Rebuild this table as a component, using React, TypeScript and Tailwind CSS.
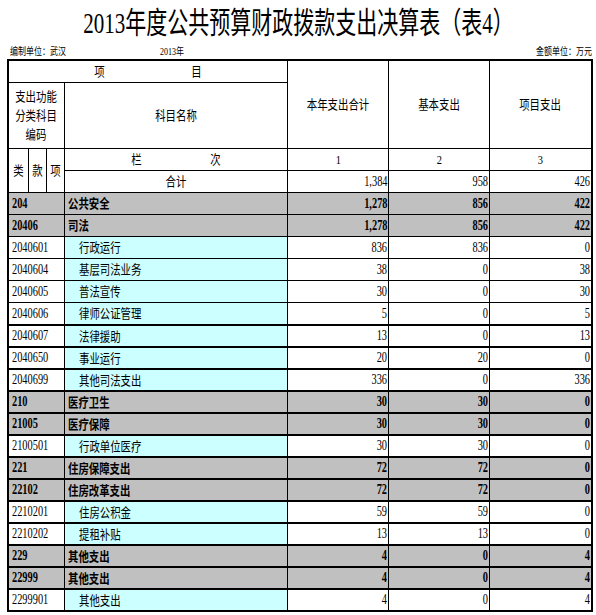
import React from "react";

type Row = {
  code: string;
  name: string;
  a: string;
  b: string;
  c: string;
  bold?: boolean;
};

const rows: Row[] = [
  { code: "204", name: "公共安全", a: "1,278", b: "856", c: "422", bold: true },
  { code: "20406", name: "司法", a: "1,278", b: "856", c: "422", bold: true },
  { code: "2040601", name: "行政运行", a: "836", b: "836", c: "0" },
  { code: "2040604", name: "基层司法业务", a: "38", b: "0", c: "38" },
  { code: "2040605", name: "普法宣传", a: "30", b: "0", c: "30" },
  { code: "2040606", name: "律师公证管理", a: "5", b: "0", c: "5" },
  { code: "2040607", name: "法律援助", a: "13", b: "0", c: "13" },
  { code: "2040650", name: "事业运行", a: "20", b: "20", c: "0" },
  { code: "2040699", name: "其他司法支出", a: "336", b: "0", c: "336" },
  { code: "210", name: "医疗卫生", a: "30", b: "30", c: "0", bold: true },
  { code: "21005", name: "医疗保障", a: "30", b: "30", c: "0", bold: true },
  { code: "2100501", name: "行政单位医疗", a: "30", b: "30", c: "0" },
  { code: "221", name: "住房保障支出", a: "72", b: "72", c: "0", bold: true },
  { code: "22102", name: "住房改革支出", a: "72", b: "72", c: "0", bold: true },
  { code: "2210201", name: "住房公积金", a: "59", b: "59", c: "0" },
  { code: "2210202", name: "提租补贴", a: "13", b: "13", c: "0" },
  { code: "229", name: "其他支出", a: "4", b: "0", c: "4", bold: true },
  { code: "22999", name: "其他支出", a: "4", b: "0", c: "4", bold: true },
  { code: "2299901", name: "其他支出", a: "4", b: "0", c: "4" },
];

// narrow text, the sheet's glyphs are squeezed sideways
const S = ({ children, o = "c" }: { children: React.ReactNode; o?: "l" | "r" | "c" }) => (
  <span
    className={
      "inline-block whitespace-nowrap scale-x-[0.8] " +
      (o === "l" ? "origin-left" : o === "r" ? "origin-right" : "origin-center")
    }
  >
    {children}
  </span>
);

// digits are taller and narrower still
const N = ({ children, o = "r" }: { children: React.ReactNode; o?: "l" | "r" }) => (
  <span
    className={
      "inline-block whitespace-nowrap text-[14px] scale-x-[0.74] " +
      (o === "l" ? "origin-left" : "origin-right")
    }
  >
    {children}
  </span>
);

const App = () => {
  return (
    <div className="w-[596px] h-[615px] bg-white text-black font-['Liberation_Serif','Noto_Sans_CJK_SC',serif] overflow-hidden">
      <div className="h-[45px] flex items-center justify-center">
        <span className="inline-block whitespace-nowrap text-[30px] leading-none scale-x-[0.7] origin-center">
          2013年度公共预算财政拨款支出决算表（表4）
        </span>
      </div>
      <div className="h-[14px] flex items-center text-[10px] leading-none pl-[10px] pr-[4px]">
        <div className="w-[150px]">
          <S o="l">编制单位：武汉</S>
        </div>
        <div className="flex-1">
          <S o="l">2013年</S>
        </div>
        <div>
          <S o="r">金额单位：万元</S>
        </div>
      </div>

      <div className="ml-[7px] w-[586px] border-2 border-black bg-black text-[13px] leading-none">
        <div className="grid grid-cols-[19px_17px_17px_222px_100px_100px_101px] grid-rows-[21px_65px_21px_21px] gap-px">
          <div className="col-span-4 bg-white flex items-center justify-center gap-[84px]">
            <S>项</S>
            <S>目</S>
          </div>
          <div className="row-span-2 bg-white flex items-center justify-center">
            <S>本年支出合计</S>
          </div>
          <div className="row-span-2 bg-white flex items-center justify-center">
            <S>基本支出</S>
          </div>
          <div className="row-span-2 bg-white flex items-center justify-center">
            <S>项目支出</S>
          </div>
          <div className="col-span-3 bg-white flex flex-col items-center justify-center leading-[19px]">
            <S>支出功能</S>
            <S>分类科目</S>
            <S>编码</S>
          </div>
          <div className="bg-white flex items-center justify-center">
            <S>科目名称</S>
          </div>
          <div className="row-span-2 bg-white flex items-center justify-center">
            <S>类</S>
          </div>
          <div className="row-span-2 bg-white flex items-center justify-center">
            <S>款</S>
          </div>
          <div className="row-span-2 bg-white flex items-center justify-center">
            <S>项</S>
          </div>
          <div className="bg-white flex items-center justify-center gap-[66px]">
            <S>栏</S>
            <S>次</S>
          </div>
          <div className="bg-white flex items-center justify-center">
            <S>1</S>
          </div>
          <div className="bg-white flex items-center justify-center">
            <S>2</S>
          </div>
          <div className="bg-white flex items-center justify-center">
            <S>3</S>
          </div>
          <div className="bg-white flex items-center justify-center">
            <S>合计</S>
          </div>
          <div className="bg-white flex items-center justify-end pr-px">
            <N>1,384</N>
          </div>
          <div className="bg-white flex items-center justify-end pr-px">
            <N>958</N>
          </div>
          <div className="bg-white flex items-center justify-end pr-px">
            <N>426</N>
          </div>
        </div>

        <div className="flex flex-col">
          {rows.map((r, i) => (
            <div
              key={r.code}
              className={
                "grid grid-cols-[55px_222px_100px_100px_101px] gap-x-px " +
                (i >= 6 ? "mt-[2px] h-[20px]" : "mt-px h-[21px]") +
                (r.bold ? " font-bold" : "")
              }
            >
              <div
                className={
                  "flex items-center pl-[3px] " + (r.bold ? "bg-[#c0c0c0]" : "bg-white")
                }
              >
                <N o="l">{r.code}</N>
              </div>
              <div
                className={
                  "flex items-center " +
                  (r.bold ? "bg-[#c0c0c0] pl-[3px]" : "bg-[#ccffff] pl-[14px]")
                }
              >
                <S o="l">{r.name}</S>
              </div>
              <div
                className={
                  "flex items-center justify-end pr-px " +
                  (r.bold ? "bg-[#c0c0c0]" : "bg-white")
                }
              >
                <N>{r.a}</N>
              </div>
              <div
                className={
                  "flex items-center justify-end pr-px " +
                  (r.bold ? "bg-[#c0c0c0]" : "bg-white")
                }
              >
                <N>{r.b}</N>
              </div>
              <div
                className={
                  "flex items-center justify-end pr-px " +
                  (r.bold ? "bg-[#c0c0c0]" : "bg-white")
                }
              >
                <N>{r.c}</N>
              </div>
            </div>
          ))}
        </div>
      </div>
    </div>
  );
};

export default App;
